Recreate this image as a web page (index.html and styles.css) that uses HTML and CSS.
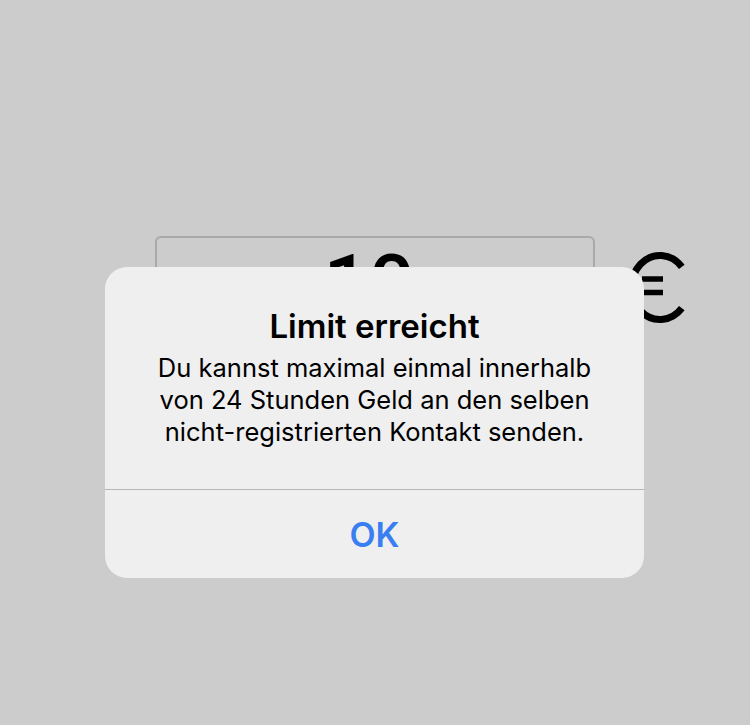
FILE: index.html
```html
<!DOCTYPE html>
<html lang="de">
<head>
    <meta charset="UTF-8">
    <meta name="viewport" content="width=device-width, initial-scale=1.0">
    <title>Limit erreicht</title>
    <link rel="stylesheet" href="styles.css">
</head>
<body>
    <div class="screen">
        <!-- Betrag-Eingabe hinter dem Dialog -->
        <div class="amount-row">
            <div class="amount-box">
                <span class="amount-value">10</span>
            </div>
            <svg class="euro" width="66" height="76" viewBox="0 0 66 76">
                <path d="M55.8 16.9 A28.5 32 0 1 0 55.8 58.1" fill="none" stroke="#000" stroke-width="7"/>
                <line x1="16" y1="29" x2="37" y2="29" stroke="#000" stroke-width="5.5"/>
                <line x1="16" y1="42.5" x2="37" y2="42.5" stroke="#000" stroke-width="5.5"/>
            </svg>
        </div>

        <!-- Alert -->
        <div class="alert">
            <div class="alert-body">
                <h2 class="alert-title">Limit erreicht</h2>
                <p class="alert-message">Du kannst maximal einmal innerhalb<br>von 24 Stunden Geld an den selben<br>nicht-registrierten Kontakt senden.</p>
            </div>
            <button class="alert-button">OK</button>
        </div>
    </div>
</body>
</html>
```

FILE: styles.css
```css
body {
    margin: 0;
    background: #cccccc;
    font-family: Inter, "Noto Sans", sans-serif;
}
.screen {
    position: relative;
    width: 750px;
    height: 725px;
    overflow: hidden;
}
.amount-row {
    display: flex;
    align-items: flex-start;
    padding-top: 236px;
    padding-left: 155px;
}
.amount-box {
    width: 440px;
    height: 84px;
    box-sizing: border-box;
    border: 2px solid #a9a9a9;
    border-radius: 6px;
    display: flex;
    justify-content: center;
    padding-top: 6px;
}
.amount-value {
    font-family: Roboto, sans-serif;
    font-size: 80px;
    font-weight: 500;
    line-height: 1;
    color: #000;
    margin-left: -12px;
}
.euro {
    margin-left: 31px;
    margin-top: 14px;
}
.alert {
    position: absolute;
    left: 105px;
    top: 267px;
    width: 539px;
    height: 311px;
    background: #efeff0;
    border-radius: 22px;
    display: flex;
    flex-direction: column;
    overflow: hidden;
}
.alert-body {
    padding: 39px 20px 0;
    height: 223px;
    box-sizing: border-box;
    border-bottom: 1px solid #b5b5b8;
    text-align: center;
}
.alert-title {
    margin: 0;
    font-size: 33px;
    line-height: 40px;
    font-weight: 600;
    color: #000;
}
.alert-message {
    margin: 6px 0 0;
    font-size: 25.5px;
    line-height: 32px;
    color: #000;
}
.alert-button {
    flex: 1;
    background: none;
    border: none;
    font-family: inherit;
    font-size: 34px;
    font-weight: 600;
    color: #3a7ff2;
    padding: 0;
}
```
